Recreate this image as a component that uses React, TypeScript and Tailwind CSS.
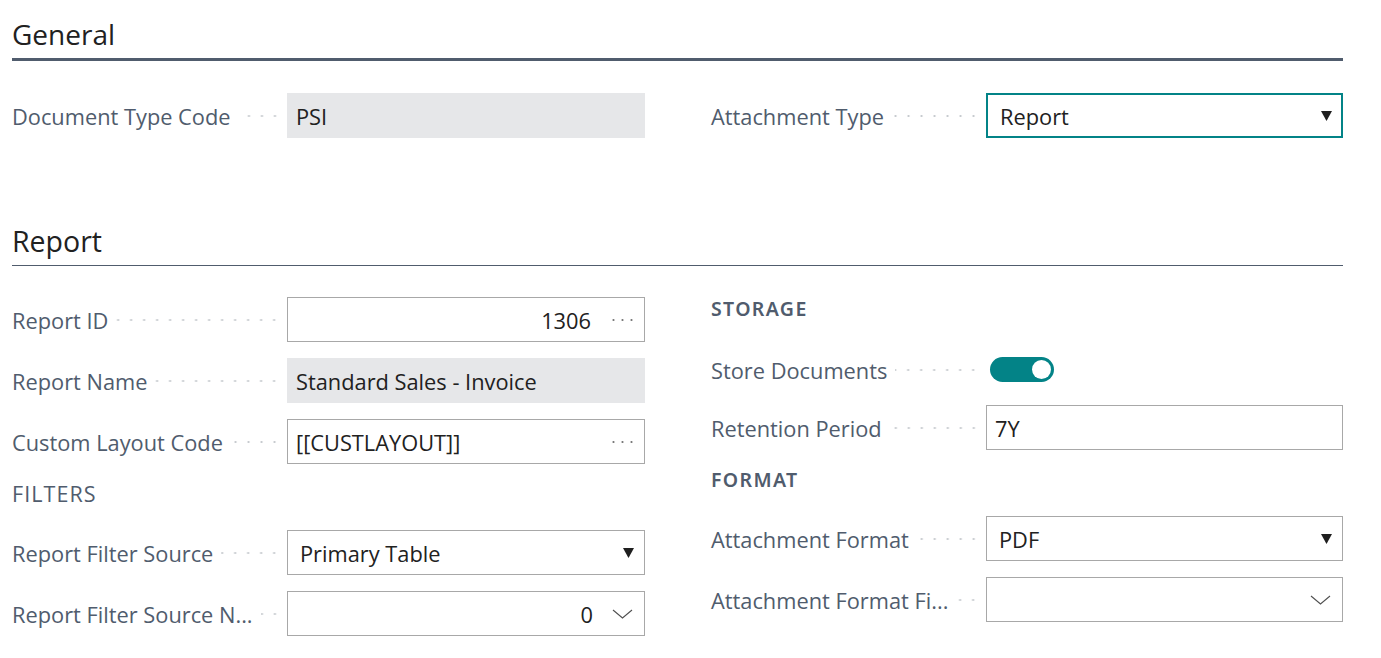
import type { ReactNode } from 'react';

const dots =
  'h-[6px] flex-1 bg-[radial-gradient(circle,#c6cace_0.9px,transparent_1.3px)] bg-[length:13px_6px] bg-[position:right_center] bg-repeat-x';

function Label({ children }: { children: ReactNode }) {
  return (
    <div className="flex w-[275px] shrink-0 items-center">
      <span className="whitespace-nowrap pt-[4px] text-[21.8px] text-[#505c6d]">{children}</span>
      <span className={`ml-2 mr-[6px] ${dots}`} />
    </div>
  );
}

function Field({ label, children }: { label: string; children: ReactNode }) {
  return (
    <div className="flex h-[45px] items-center">
      <Label>{label}</Label>
      <div className="h-full flex-1">{children}</div>
    </div>
  );
}

function Box({
  children,
  gray,
  focused,
  select,
}: {
  children?: ReactNode;
  gray?: boolean;
  focused?: boolean;
  select?: boolean;
}) {
  const look = gray
    ? 'bg-[#e6e7e9] px-[9px]'
    : focused
      ? 'border-2 border-[#038387] bg-white pl-[12px] pr-[9px]'
      : select
        ? 'border border-[#a8a8a8] bg-white pl-[12px] pr-[10px]'
        : 'border border-[#a8a8a8] bg-white pl-[8px] pr-[11px]';
  return (
    <div className={`flex h-full items-center pt-[3px] text-[21.8px] text-[#212121] ${look}`}>{children}</div>
  );
}

function Triangle() {
  return (
    <svg width="11" height="11" viewBox="0 0 11 11" className="mb-[3px] ml-auto shrink-0">
      <polygon points="0,1 11,1 5.5,11" fill="#1f1f1f" />
    </svg>
  );
}

function Ellipsis() {
  return (
    <svg width="21" height="6" viewBox="0 0 21 6" className="mb-[3px] ml-[21px] shrink-0">
      <circle cx="1.5" cy="3" r="1.1" fill="#707070" />
      <circle cx="10.5" cy="3" r="1.1" fill="#707070" />
      <circle cx="19.5" cy="3" r="1.1" fill="#707070" />
    </svg>
  );
}

function Chevron({ className = '' }: { className?: string }) {
  return (
    <svg width="21" height="10" viewBox="0 0 21 10" className={`mb-[3px] shrink-0 ${className}`}>
      <polyline points="1,1 10.5,9 20,1" fill="none" stroke="#505050" strokeWidth="1.1" />
    </svg>
  );
}

function Toggle() {
  return (
    <div className="flex h-[25px] w-[64px] items-center justify-end rounded-full bg-[#038387] pr-[3px]">
      <div className="h-[19px] w-[19px] rounded-full bg-white" />
    </div>
  );
}

function SubHeading({ children }: { children: ReactNode }) {
  return (
    <div className="flex h-[22px] items-center pt-[2px] font-['Noto_Sans','Open_Sans',sans-serif] text-[19.5px] font-semibold tracking-[0.07em] text-[#505c6d]">
      {children}
    </div>
  );
}

export default function App() {
  return (
    <div className="min-h-[658px] w-full bg-white px-[12px] font-['Open_Sans','Noto_Sans',sans-serif] text-[#212121]">
      <div className="w-[1331px]">
        <div className="border-b-[3px] border-[#505c6d] pb-[4px] pt-[14px]">
          <h2 className="text-[28px] leading-[40px]">General</h2>
        </div>

        <div className="mt-[32px] grid grid-cols-[633px_632px] gap-x-[66px]">
          <Field label="Document Type Code">
            <Box gray>PSI</Box>
          </Field>
          <Field label="Attachment Type">
            <Box focused>
              Report
              <Triangle />
            </Box>
          </Field>
        </div>

        <div className="mt-[83px] border-b border-[#505c6d] pb-[4px]">
          <h2 className="text-[28.5px] leading-[40px]">Report</h2>
        </div>

        <div className="mt-[31px] grid grid-cols-[633px_632px] gap-x-[66px]">
          <div className="flex flex-col">
            <Field label="Report ID">
              <Box>
                <span className="ml-auto">1306</span>
                <Ellipsis />
              </Box>
            </Field>
            <div className="mt-[16px]">
              <Field label="Report Name">
                <Box gray>Standard Sales - Invoice</Box>
              </Field>
            </div>
            <div className="mt-[16px]">
              <Field label="Custom Layout Code">
                <Box>
                  [[CUSTLAYOUT]]
                  <span className="ml-auto">
                    <Ellipsis />
                  </span>
                </Box>
              </Field>
            </div>
            <div className="mt-[6px] flex h-[45px] items-center pt-[3px] text-[21.5px] tracking-[0.05em] text-[#505c6d]">
              FILTERS
            </div>
            <div className="mt-[15px]">
              <Field label="Report Filter Source">
                <Box select>
                  Primary Table
                  <Triangle />
                </Box>
              </Field>
            </div>
            <div className="mt-[16px]">
              <Field label="Report Filter Source N...">
                <Box>
                  <span className="ml-auto">0</span>
                  <Chevron className="ml-[19px]" />
                </Box>
              </Field>
            </div>
          </div>

          <div className="flex flex-col">
            <SubHeading>STORAGE</SubHeading>
            <div className="mt-[28px] flex h-[45px] items-center">
              <Label>Store Documents</Label>
              <div className="pl-[4px]">
                <Toggle />
              </div>
            </div>
            <div className="mt-[13px]">
              <Field label="Retention Period">
                <Box>7Y</Box>
              </Field>
            </div>
            <div className="mt-[18px]">
              <SubHeading>FORMAT</SubHeading>
            </div>
            <div className="mt-[26px]">
              <Field label="Attachment Format">
                <Box select>
                  PDF
                  <Triangle />
                </Box>
              </Field>
            </div>
            <div className="mt-[16px]">
              <Field label="Attachment Format Fi...">
                <Box>
                  <Chevron className="ml-auto" />
                </Box>
              </Field>
            </div>
          </div>
        </div>
      </div>
    </div>
  );
}
